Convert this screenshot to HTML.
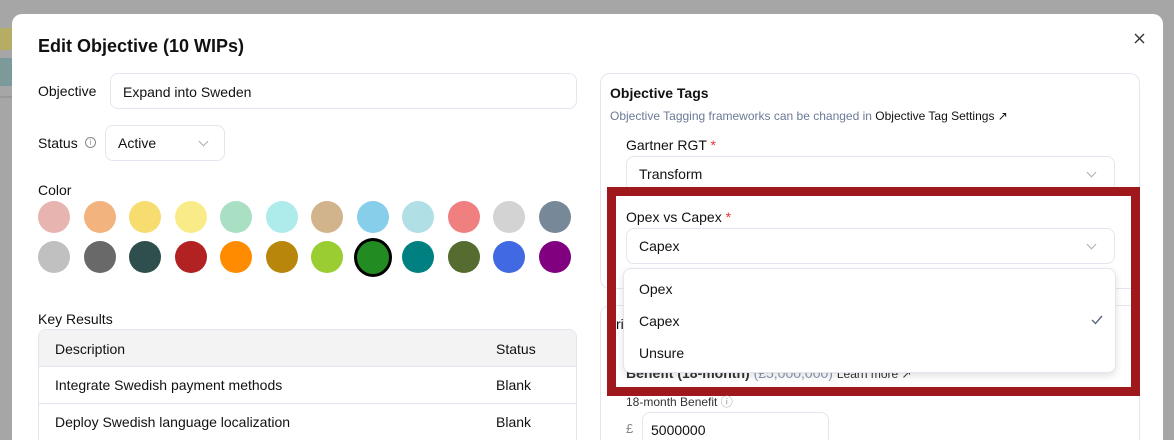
<!DOCTYPE html>
<html><head><style>
*{box-sizing:border-box;margin:0;padding:0}
html,body{width:1174px;height:440px;overflow:hidden}
body{background:#a6a6a6;font-family:"Liberation Sans",sans-serif;color:#111;position:relative}
.a{position:absolute}
.modal{left:12px;top:14px;width:1151px;height:426px;background:#fff;border-radius:10px 10px 0 0}
.inp{border:1px solid #e3e6ee;border-radius:8px;background:#fff}
.dot{position:absolute;width:32px;height:32px;border-radius:50%}
.t{font-size:14px}
.chev{position:absolute;width:7px;height:7px;border-right:1.3px solid #a8adb8;border-bottom:1.3px solid #a8adb8;transform:rotate(45deg)}
</style></head><body>
<div class="a" style="left:0;top:28px;width:12px;height:22px;background:#b5ad63"></div>
<div class="a" style="left:0;top:58px;width:12px;height:28px;background:#7d9a9a"></div>
<div class="a" style="left:0;top:96px;width:12px;height:2px;background:#999"></div>
<div class="modal a"></div>
<div class="a" style="left:38px;top:36px;font-size:18px;font-weight:bold">Edit Objective (10 WIPs)</div>
<svg class="a" style="left:1134px;top:33px" width="11" height="11" viewBox="0 0 11 11"><path d="M1 1L10 10M10 1L1 10" stroke="#333" stroke-width="1.4"/></svg>

<div class="a t" style="left:38px;top:83px">Objective</div>
<div class="a inp" style="left:110px;top:73px;width:467px;height:36px"></div>
<div class="a t" style="left:123px;top:84px">Expand into Sweden</div>

<div class="a t" style="left:38px;top:135px">Status</div>
<div class="a" style="left:85px;top:137px;width:11px;height:11px;border:1px solid #888;border-radius:50%;font-size:8px;text-align:center;line-height:9px;color:#888">i</div>
<div class="a inp" style="left:105px;top:125px;width:120px;height:36px"></div>
<div class="a t" style="left:118px;top:135px">Active</div>
<div class="chev" style="left:200px;top:138px"></div>

<div class="a t" style="left:38px;top:182px">Color</div>
<div id="dots"></div>
<script>
var c1=["#e8b4b0","#f2b37e","#f7dc6f","#f9ec88","#a9e0c3","#aeecec","#d2b48c","#87ceeb","#b0dfe5","#f08080","#d3d3d3","#778899"];
var c2=["#c0c0c0","#696969","#2f4f4f","#b22222","#ff8c00","#b8860b","#9acd32","#228b22","#008080","#556b2f","#4169e1","#800080"];
var h="";
for(var i=0;i<12;i++){var x=38+i*45.5;
h+='<div class="dot" style="left:'+x+'px;top:201px;background:'+c1[i]+'"></div>';
h+='<div class="dot" style="left:'+(i==7?x-3:x)+'px;top:'+(i==7?238:241)+'px;background:'+c2[i]+(i==7?';width:38px;height:39px;border:3px solid #000':'')+'"></div>';}
document.getElementById('dots').innerHTML=h;
</script>

<div class="a t" style="left:38px;top:311px">Key Results</div>
<div class="a" style="left:38px;top:329px;width:539px;height:120px;border:1px solid #e3e6ee;border-radius:8px;overflow:hidden">
<div style="height:37px;background:#f3f3f3;border-bottom:1px solid #e3e6ee"></div>
<div style="height:37px;border-bottom:1px solid #e3e6ee"></div>
</div>
<div class="a t" style="left:55px;top:341px">Description</div>
<div class="a t" style="left:496px;top:341px">Status</div>
<div class="a t" style="left:55px;top:377px">Integrate Swedish payment methods</div>
<div class="a t" style="left:496px;top:377px">Blank</div>
<div class="a t" style="left:55px;top:414px">Deploy Swedish language localization</div>
<div class="a t" style="left:496px;top:414px">Blank</div>

<div class="a" style="left:600px;top:73px;width:540px;height:216px;border:1px solid #e3e6ee;border-radius:10px"></div>
<div class="a" style="left:600px;top:305px;width:540px;height:150px;border:1px solid #e3e6ee;border-radius:10px"></div>
<div class="a t" style="left:610px;top:85px;font-weight:bold">Objective Tags</div>
<div class="a" style="left:610px;top:109px;font-size:12px;color:#6b7a96">Objective Tagging frameworks can be changed in <span style="color:#111">Objective Tag Settings ↗</span></div>
<div class="a t" style="left:626px;top:137px">Gartner RGT <span style="color:#e33">*</span></div>
<div class="a inp" style="left:626px;top:156px;width:489px;height:36px"></div>
<div class="a t" style="left:639px;top:166px">Transform</div>
<div class="chev" style="left:1088px;top:169px"></div>

<div class="a" style="left:607px;top:187px;width:533px;height:209px;border:9px solid #9f181c"></div>
<div class="a" style="left:616px;top:196px;width:515px;height:191px;background:#fff"></div>
<div class="a t" style="left:626px;top:209px">Opex vs Capex <span style="color:#e33">*</span></div>
<div class="a inp" style="left:626px;top:228px;width:489px;height:36px"></div>
<div class="a t" style="left:639px;top:238px">Capex</div>
<div class="chev" style="left:1088px;top:241px"></div>
<div class="a" style="left:616px;top:288px;width:515px;height:1px;background:#e3e6ee"></div>
<div class="a" style="left:616px;top:305px;width:515px;height:1px;background:#e3e6ee"></div>
<div class="a" style="left:616px;top:355px;width:515px;height:32px;overflow:hidden"><div style="position:absolute;left:10px;top:10px;font-size:14px;font-weight:bold;color:#333">Benefit (18-month) <span style="color:#8a97b0;font-weight:normal">(£5,000,000)</span> <span style="font-weight:normal;font-size:12px">Learn more ↗</span></div></div>
<div class="a" style="left:616px;top:316px;font-size:14px">ri</div>
<div class="a inp" style="left:623px;top:268px;width:493px;height:105px;box-shadow:0 3px 8px rgba(0,0,0,.12)"></div>
<div class="a t" style="left:639px;top:281px">Opex</div>
<div class="a t" style="left:639px;top:313px">Capex</div>
<svg class="a" style="left:1091px;top:315px" width="12" height="10" viewBox="0 0 12 10"><path d="M1 5L4.5 8.5L11 1" fill="none" stroke="#5a6580" stroke-width="1.4"/></svg>
<div class="a t" style="left:639px;top:345px">Unsure</div>

<div class="a" style="left:626px;top:393px;font-size:12px;color:#333">18-month Benefit <span style="color:#999">ⓘ</span></div>
<div class="a" style="left:626px;top:421px;font-size:13px;color:#888">£</div>
<div class="a inp" style="left:642px;top:412px;width:187px;height:36px"></div>
<div class="a t" style="left:651px;top:422px">5000000</div>
</body></html>
